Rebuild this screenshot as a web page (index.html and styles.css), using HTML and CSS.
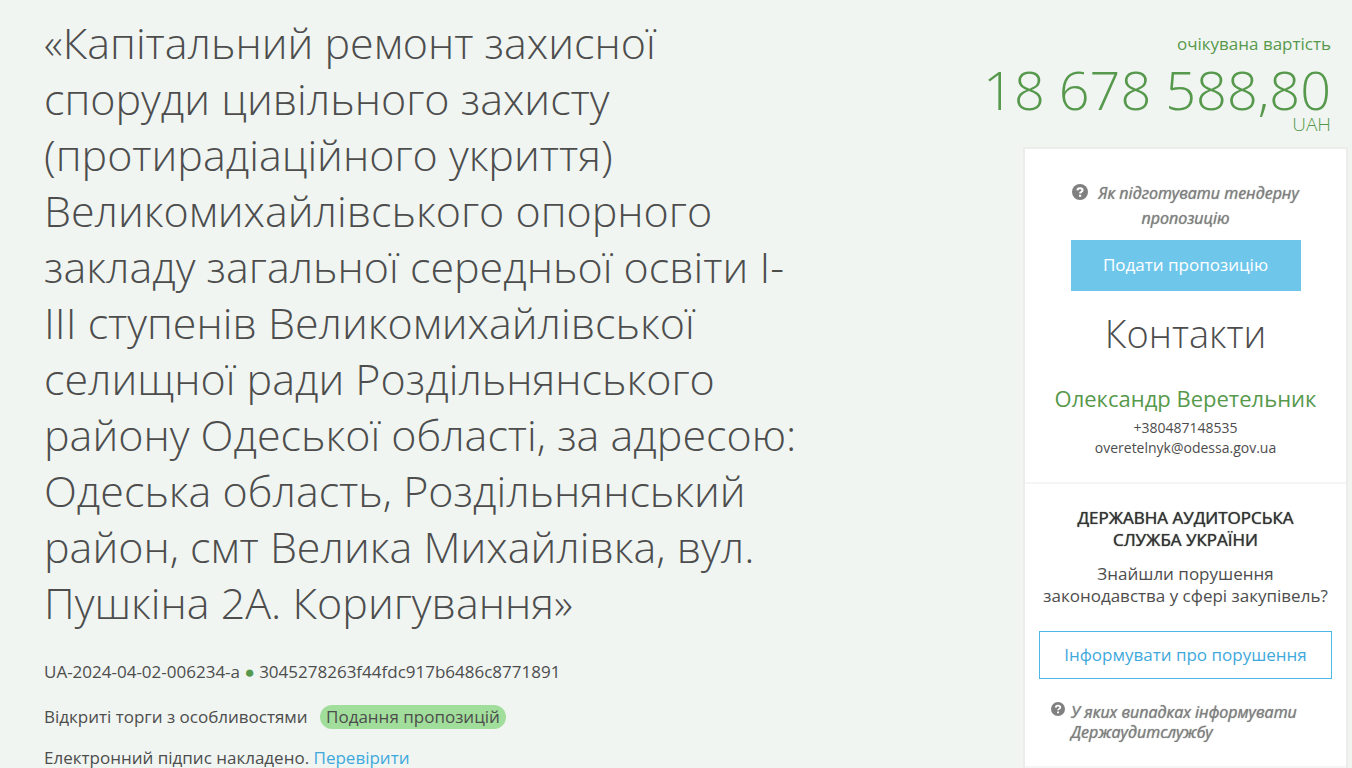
FILE: index.html
```html
<!DOCTYPE html>
<html lang="uk">

<head>
    <meta charset="UTF-8">
    <meta name="viewport" content="width=device-width, initial-scale=1">
    <title>UA-2024-04-02-006234-a</title>
    <link rel="stylesheet" href="styles.css">
</head>

<body>
    <div class="tender">
        <main class="tender-head">
            <h1 class="tender-title">«Капітальний ремонт захисної споруди цивільного захисту (протирадіаційного укриття) Великомихайлівського опорного закладу загальної середньої освіти І-ІІІ ступенів Великомихайлівської селищної ради Роздільнянського району Одеської області, за адресою: Одеська область, Роздільнянський район, смт Велика Михайлівка, вул. Пушкіна 2А. Коригування»</h1>
            <p class="tender-id">UA-2024-04-02-006234-a <span class="marker">●</span> 3045278263f44fdc917b6486c8771891</p>
            <p class="tender-type">Відкриті торги з особливостями <span class="status">Подання пропозицій</span></p>
            <p class="tender-sign">Електронний підпис накладено. <a href="#">Перевірити</a></p>
        </main>
        <aside class="side">
            <div class="price">
                <div class="price-label">очікувана вартість</div>
                <div class="price-value">18 678 588,80</div>
                <div class="price-currency">UAH</div>
            </div>
            <div class="card">
                <section class="card-section">
                    <a class="help" href="#">
                        <svg class="help-icon" viewBox="0 0 16 16" aria-hidden="true">
                            <circle cx="8" cy="8" r="8" />
                            <path d="M5.4 6.4C5.5 4.9 6.5 4.2 8 4.2s2.6.8 2.6 2c0 1.7-2.5 1.6-2.5 3.2M7 11.8h2.2" />
                        </svg>
                        Як підготувати тендерну пропозицію
                    </a>
                    <button class="btn-bid" type="button">Подати пропозицію</button>
                    <h2 class="contacts-title">Контакти</h2>
                    <div class="contact-name">Олександр Веретельник</div>
                    <div class="contact-line">+380487148535</div>
                    <div class="contact-line">overetelnyk@odessa.gov.ua</div>
                </section>
                <section class="card-section audit">
                    <h3 class="audit-title">ДЕРЖАВНА АУДИТОРСЬКА СЛУЖБА УКРАЇНИ</h3>
                    <p class="audit-text">Знайшли порушення законодавства у сфері закупівель?</p>
                    <button class="btn-report" type="button">Інформувати про порушення</button>
                    <a class="help help-audit" href="#">
                        <svg class="help-icon" viewBox="0 0 16 16" aria-hidden="true">
                            <circle cx="8" cy="8" r="8" />
                            <path d="M5.4 6.4C5.5 4.9 6.5 4.2 8 4.2s2.6.8 2.6 2c0 1.7-2.5 1.6-2.5 3.2M7 11.8h2.2" />
                        </svg>
                        <span>У яких випадках інформувати Держаудитслужбу</span>
                    </a>
                </section>
                <section class="card-section"></section>
            </div>
        </aside>
    </div>
</body>

</html>
```
FILE: styles.css
```css
* {
    box-sizing: border-box;
}

body {
    margin: 0;
    background-color: #f0f5f2;
    color: #4d4d4d;
    font-family: "Open Sans", "Noto Sans", sans-serif;
    font-size: 17px;
    line-height: 24px;
    overflow-x: hidden;
}

a {
    color: #3fa9dc;
    text-decoration: none;
}

h1,
h2,
h3,
p {
    margin: 0;
}

.tender {
    display: flex;
    justify-content: space-between;
    align-items: flex-start;
    height: 100vh;
    padding: 0 4px 0 44px;
    overflow: hidden;
}

.tender-head {
    flex: 0 1 760px;
    padding-top: 15px;
}

.tender-title {
    margin-bottom: 29px;
    font-size: 43px;
    line-height: 56px;
    font-weight: 300;
}

.tender-id {
    margin-bottom: 21px;
}

.marker {
    color: #57994c;
}

.tender-type {
    margin-bottom: 17px;
}

.status {
    display: inline-block;
    margin-left: 8px;
    padding: 0 6px;
    border-radius: 12px;
    background-color: #a2de9b;
}

.side {
    flex: 0 0 325px;
    min-width: 0;
}

.price {
    display: flex;
    flex-direction: column;
    align-items: flex-end;
    padding: 32px 17px 14px 0;
    color: #57994c;
    white-space: nowrap;
}

.price-value {
    margin-top: 6px;
    font-size: 54px;
    line-height: 54px;
    font-weight: 300;
}

.price-currency {
    font-size: 19px;
    line-height: 17px;
    font-weight: 300;
}

.card {
    border: 2px solid #ececec;
    background-color: #fff;
    text-align: center;
}

.card-section {
    padding: 32px 14px 24px;
}

.card-section + .card-section {
    border-top: 2px solid #f5f5f5;
}

.help {
    display: block;
    margin: 0 24px 9px;
    color: #808080;
    font-size: 16px;
    line-height: 25px;
    font-style: italic;
    text-shadow: 0 0 1px #808080;
}

.help-icon {
    width: 16px;
    height: 16px;
    margin-right: 6px;
    vertical-align: -1px;
}

.help-icon circle {
    fill: #808080;
}

.help-icon path {
    fill: none;
    stroke: #fff;
    stroke-width: 2;
}

.btn-bid {
    width: 230px;
    height: 51px;
    padding: 0 0 2px;
    border: 0;
    background-color: #6ec7eb;
    color: #fff;
    font-family: inherit;
    font-size: 17px;
}

.contacts-title {
    margin: 17px 0 26px;
    font-size: 38px;
    line-height: 50px;
    font-weight: 300;
}

.contact-name {
    margin-bottom: 6px;
    color: #57994c;
    font-size: 22px;
    line-height: 28px;
}

.contact-line {
    font-size: 14px;
    line-height: 20px;
}

.audit {
    padding-top: 23px;
}

.audit-title {
    margin: 0 30px 12px;
    color: #333;
    font-size: 17px;
    line-height: 22px;
    font-weight: 400;
    text-shadow: 0 0 1px #333;
}

.audit-text {
    margin-bottom: 24px;
    font-size: 17px;
    line-height: 22px;
}

.btn-report {
    width: 100%;
    height: 48px;
    padding: 0 0 2px;
    border: 1px solid #4db8e3;
    background-color: #fff;
    color: #3fa9dc;
    font-family: inherit;
    font-size: 17px;
}

.help-audit {
    display: flex;
    align-items: flex-start;
    margin: 23px 12px 0;
    line-height: 20px;
    text-align: left;
}

.help-audit .help-icon {
    flex: none;
    width: 14px;
    height: 14px;
}
```
